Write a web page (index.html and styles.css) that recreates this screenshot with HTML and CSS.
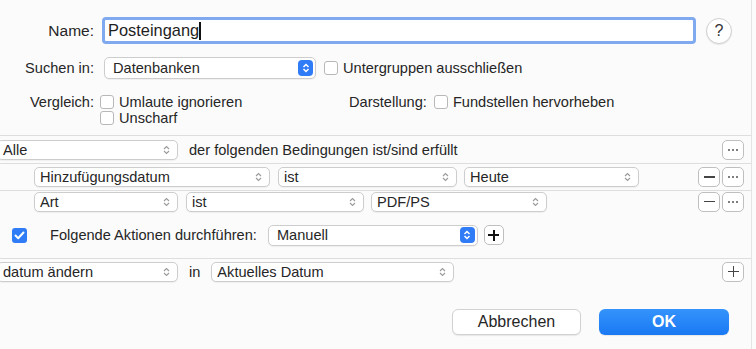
FILE: index.html
```html
<!DOCTYPE html>
<html lang="de">
<head>
    <meta charset="UTF-8">
    <title>Intelligente Gruppe</title>
    <link rel="stylesheet" href="styles.css">
</head>
<body>
    <div class="dialog">
        <div class="field-row name-row">
            <div class="label">Name:</div>
            <div class="name-field"><span>Posteingang</span><span class="caret"></span></div>
            <div class="help">?</div>
        </div>

        <div class="field-row search-row">
            <div class="label">Suchen in:</div>
            <div class="popup popup-search">
                <span>Datenbanken</span>
                <span class="stepper"><svg width="8" height="10" viewBox="0 0 8 10"><path d="M1.5 4 L4 1.5 L6.5 4 M1.5 6 L4 8.5 L6.5 6" fill="none" stroke="#fff" stroke-width="1.5"/></svg></span>
            </div>
            <label class="check"><span class="box"></span>Untergruppen ausschließen</label>
        </div>

        <div class="field-row compare-row">
            <div class="label">Vergleich:</div>
            <div class="check-col">
                <label class="check"><span class="box"></span>Umlaute ignorieren</label>
                <label class="check"><span class="box"></span>Unscharf</label>
            </div>
            <div class="display-label">Darstellung:</div>
            <label class="check"><span class="box"></span>Fundstellen hervorheben</label>
        </div>

        <div class="rules">
            <div class="rule-row rule-head">
                <div class="popup popup-all">
                    <span>Alle</span>
                    <svg class="chev" width="7" height="10" viewBox="0 0 7 10"><path d="M1 4 L3.5 1.5 L6 4 M1 6 L3.5 8.5 L6 6" fill="none" stroke="#9a9a9a" stroke-width="1.1"/></svg>
                </div>
                <div class="rule-text">der folgenden Bedingungen ist/sind erfüllt</div>
                <div class="tools">
                    <div class="tool"><span class="dots"><i></i><i></i><i></i></span></div>
                </div>
            </div>

            <div class="rule-row cond-row first">
                <div class="popup w-236">
                    <span>Hinzufügungsdatum</span>
                    <svg class="chev" width="7" height="10" viewBox="0 0 7 10"><path d="M1 4 L3.5 1.5 L6 4 M1 6 L3.5 8.5 L6 6" fill="none" stroke="#9a9a9a" stroke-width="1.1"/></svg>
                </div>
                <div class="popup w-179">
                    <span>ist</span>
                    <svg class="chev" width="7" height="10" viewBox="0 0 7 10"><path d="M1 4 L3.5 1.5 L6 4 M1 6 L3.5 8.5 L6 6" fill="none" stroke="#9a9a9a" stroke-width="1.1"/></svg>
                </div>
                <div class="popup w-175">
                    <span>Heute</span>
                    <svg class="chev" width="7" height="10" viewBox="0 0 7 10"><path d="M1 4 L3.5 1.5 L6 4 M1 6 L3.5 8.5 L6 6" fill="none" stroke="#9a9a9a" stroke-width="1.1"/></svg>
                </div>
                <div class="tools">
                    <div class="tool"><span class="minus"></span></div>
                    <div class="tool"><span class="dots"><i></i><i></i><i></i></span></div>
                </div>
            </div>

            <div class="rule-row cond-row second">
                <div class="popup w-144">
                    <span>Art</span>
                    <svg class="chev" width="7" height="10" viewBox="0 0 7 10"><path d="M1 4 L3.5 1.5 L6 4 M1 6 L3.5 8.5 L6 6" fill="none" stroke="#9a9a9a" stroke-width="1.1"/></svg>
                </div>
                <div class="popup w-178">
                    <span>ist</span>
                    <svg class="chev" width="7" height="10" viewBox="0 0 7 10"><path d="M1 4 L3.5 1.5 L6 4 M1 6 L3.5 8.5 L6 6" fill="none" stroke="#9a9a9a" stroke-width="1.1"/></svg>
                </div>
                <div class="popup w-176">
                    <span>PDF/PS</span>
                    <svg class="chev" width="7" height="10" viewBox="0 0 7 10"><path d="M1 4 L3.5 1.5 L6 4 M1 6 L3.5 8.5 L6 6" fill="none" stroke="#9a9a9a" stroke-width="1.1"/></svg>
                </div>
                <div class="tools">
                    <div class="tool"><span class="minus"></span></div>
                    <div class="tool"><span class="dots"><i></i><i></i><i></i></span></div>
                </div>
            </div>

            <div class="rule-row action-row">
                <span class="box checked"><svg width="11" height="9" viewBox="0 0 11 9"><path d="M1.5 4.5 L4.2 7.2 L9.5 1.5" fill="none" stroke="#fff" stroke-width="2" stroke-linecap="round" stroke-linejoin="round"/></svg></span>
                <div class="action-text">Folgende Aktionen durchführen:</div>
                <div class="popup popup-manual">
                    <span>Manuell</span>
                    <span class="stepper"><svg width="8" height="10" viewBox="0 0 8 10"><path d="M1.5 4 L4 1.5 L6.5 4 M1.5 6 L4 8.5 L6.5 6" fill="none" stroke="#fff" stroke-width="1.5"/></svg></span>
                </div>
                <div class="tool tool-add"><span class="plus bold"></span></div>
            </div>

            <div class="rule-row change-row">
                <div class="popup popup-all">
                    <span>datum ändern</span>
                    <svg class="chev" width="7" height="10" viewBox="0 0 7 10"><path d="M1 4 L3.5 1.5 L6 4 M1 6 L3.5 8.5 L6 6" fill="none" stroke="#9a9a9a" stroke-width="1.1"/></svg>
                </div>
                <div class="rule-text">in</div>
                <div class="popup popup-date">
                    <span>Aktuelles Datum</span>
                    <svg class="chev" width="7" height="10" viewBox="0 0 7 10"><path d="M1 4 L3.5 1.5 L6 4 M1 6 L3.5 8.5 L6 6" fill="none" stroke="#9a9a9a" stroke-width="1.1"/></svg>
                </div>
                <div class="tools">
                    <div class="tool"><span class="plus"></span></div>
                </div>
            </div>
        </div>

        <div class="buttons">
            <button class="btn">Abbrechen</button>
            <button class="btn btn-ok">OK</button>
        </div>
    </div>
</body>
</html>
```

FILE: styles.css
```css
body {
    margin: 0;
    font-family: "Liberation Sans", Arial, sans-serif;
    font-size: 14.6px;
    color: #262626;
    background: #fbfbfb;
}

.dialog {
    width: 752px;
    height: 349px;
    box-sizing: border-box;
    padding-top: 17px;
    border-right: 1px solid #e4e4e4;
    overflow: hidden;
}

.field-row {
    display: flex;
    align-items: center;
}

.label {
    width: 94px;
    text-align: right;
    flex-shrink: 0;
}

/* name */

.name-row .label {
    font-size: 15.5px;
}

.name-field {
    margin-left: 8px;
    width: 594px;
    height: 27px;
    box-sizing: border-box;
    border: 3px solid #80aaf0;
    border-radius: 4px;
    background: #fff;
    padding-left: 3px;
    display: flex;
    align-items: center;
    font-size: 16.4px;
    color: #1e1e1e;
}

.caret {
    display: inline-block;
    width: 2px;
    height: 18px;
    background: #111;
}

.help {
    margin-left: 10px;
    width: 26px;
    height: 26px;
    box-sizing: border-box;
    border-radius: 50%;
    border: 1px solid #d0d0d0;
    background: #fff;
    box-shadow: 0 1px 1px rgba(0, 0, 0, 0.08);
    display: flex;
    align-items: center;
    justify-content: center;
    font-size: 16px;
    color: #333;
}

/* search */

.search-row {
    margin-top: 13px;
}

.popup {
    height: 20px;
    box-sizing: border-box;
    background: #fff;
    border: 1px solid #cdcdcd;
    border-radius: 5px;
    box-shadow: 0 1px 1px rgba(0, 0, 0, 0.05);
    display: flex;
    align-items: center;
    justify-content: space-between;
    padding: 0 7px 0 5px;
    flex-shrink: 0;
    white-space: nowrap;
}

.popup-search {
    margin-left: 10px;
    width: 212px;
    height: 22px;
    padding-left: 8px;
    padding-right: 2px;
}

.stepper {
    width: 15px;
    height: 16px;
    border-radius: 4px;
    background: #2f7cf6;
    display: flex;
    align-items: center;
    justify-content: center;
}

.check {
    display: flex;
    align-items: center;
    white-space: nowrap;
}

.box {
    width: 14px;
    height: 14px;
    box-sizing: border-box;
    border: 1px solid #b8b8b8;
    border-radius: 3px;
    background: #fff;
    margin-right: 5px;
    flex-shrink: 0;
}

.search-row .check {
    margin-left: 8px;
}

/* compare */

.compare-row {
    margin-top: 15px;
    align-items: flex-start;
    height: 32px;
}

.compare-row .label {
    line-height: 16px;
}

.check-col {
    margin-left: 6px;
    width: 249px;
    display: flex;
    flex-direction: column;
}

.check-col .check {
    height: 16px;
}

.display-label {
    line-height: 16px;
}

.compare-row > .check {
    margin-left: 7px;
    height: 16px;
}

/* rules */

.rules {
    margin-top: 9px;
    border-top: 1px solid #dedede;
}

.rule-row {
    display: flex;
    align-items: center;
    padding-right: 7px;
    white-space: nowrap;
}

.rule-head {
    height: 27px;
    border-bottom: 1px solid #dedede;
}

.popup-all {
    margin-left: -3px;
    width: 181px;
}

.rule-text {
    margin-left: 11px;
}

.tools {
    margin-left: auto;
    display: flex;
    gap: 2px;
}

.tool {
    width: 22px;
    height: 20px;
    box-sizing: border-box;
    border: 1px solid #bfbfbf;
    border-radius: 5px;
    background: #fff;
    display: flex;
    align-items: center;
    justify-content: center;
}

.dots {
    display: flex;
    gap: 2px;
}

.dots i {
    width: 2px;
    height: 2px;
    border-radius: 50%;
    background: #555;
}

.minus {
    width: 11px;
    height: 1.5px;
    background: #444;
}

.plus {
    position: relative;
    width: 11px;
    height: 11px;
}

.plus::before,
.plus::after {
    content: "";
    position: absolute;
    background: #444;
}

.plus::before {
    left: 0;
    top: 5px;
    width: 11px;
    height: 1.3px;
}

.plus::after {
    left: 5px;
    top: 0;
    width: 1.3px;
    height: 11px;
}

.plus.bold::before {
    top: 4.5px;
    height: 2.2px;
    background: #111;
}

.plus.bold::after {
    left: 4.5px;
    width: 2.2px;
    background: #111;
}

.cond-row {
    padding-left: 34px;
}

.cond-row.first {
    height: 26px;
    border-bottom: 1px solid #dedede;
}

.cond-row.second {
    height: 21px;
}

.w-236 { width: 236px; }
.w-179 { width: 179px; margin-left: 8px; }
.w-175 { width: 175px; margin-left: 7px; }
.w-144 { width: 144px; }
.w-178 { width: 178px; margin-left: 8px; }
.w-176 { width: 176px; margin-left: 7px; }

.action-row {
    height: 46px;
    border-bottom: 1px solid #dedede;
    padding-left: 12px;
}

.box.checked {
    width: 15px;
    height: 15px;
    border: none;
    background: #2f7cf6;
    display: flex;
    align-items: center;
    justify-content: center;
    margin-right: 0;
}

.action-text {
    margin-left: 23px;
}

.popup-manual {
    margin-left: 11px;
    width: 210px;
    height: 21px;
    padding-right: 2px;
    padding-left: 8px;
}

.tool-add {
    margin-left: 6px;
    width: 20px;
    height: 20px;
}

.change-row {
    height: 25px;
}

.popup-date {
    margin-left: 11px;
    width: 243px;
}

/* buttons */

.buttons {
    margin-top: 25px;
    display: flex;
    justify-content: flex-end;
    gap: 18px;
    padding-right: 22px;
}

.btn {
    width: 129px;
    height: 26px;
    border: 1px solid #d2d2d2;
    border-radius: 6px;
    background: #fff;
    box-shadow: 0 1px 1px rgba(0, 0, 0, 0.08);
    font-family: "Liberation Sans", Arial, sans-serif;
    font-size: 16px;
    color: #262626;
}

.btn-ok {
    width: 130px;
    border: none;
    background: linear-gradient(#3593fc, #1a79f3);
    color: #fff;
    font-weight: bold;
}
```
